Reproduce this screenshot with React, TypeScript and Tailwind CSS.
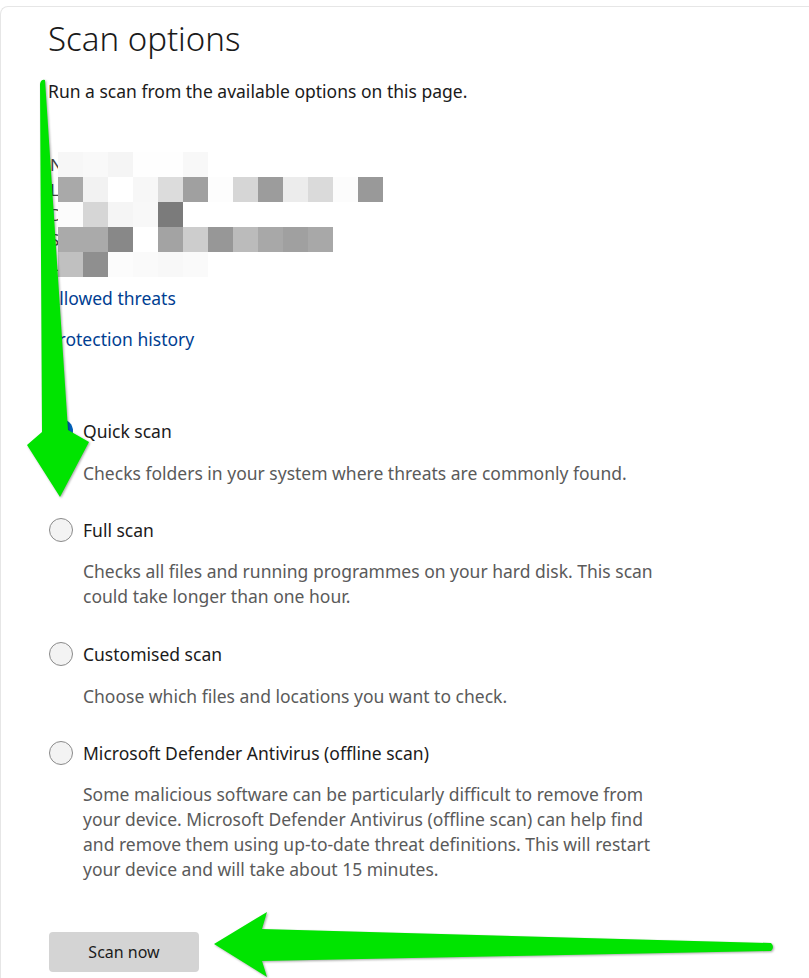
import React from "react"

const font = { fontFamily: '"Noto Sans", "Open Sans", sans-serif' }

// blurred account details, one row of grey cells per line
const blur: { letter: string; cells: string[] }[] = [
  { letter: "N", cells: ["#f7f7f7", "#f9f9f9", "#f5f5f5", "#fefefe", "#fefefe", "#f8f8f8"] },
  {
    letter: "L",
    cells: ["#a9a9a9", "#f2f2f2", "#ffffff", "#f7f7f7", "#dcdcdc", "#a0a0a0", "#fdfdfd", "#d6d6d6", "#9c9c9c", "#ececec", "#dadada", "#fcfcfc", "#999999"],
  },
  { letter: "D", cells: ["#fcfcfc", "#d6d6d6", "#f5f5f5", "#f8f8f8", "#7b7b7b"] },
  {
    letter: "S",
    cells: ["#aaaaaa", "#aaaaaa", "#888888", "#ffffff", "#a3a3a3", "#cdcdcd", "#979797", "#bbbbbb", "#a8a8a8", "#a0a0a0", "#a8a8a8"],
  },
  { letter: "L", cells: ["#c0c0c0", "#8f8f8f", "#fcfcfc", "#fafafa", "#f8f8f8", "#fafafa"] },
]

function Radio({ checked }: { checked?: boolean }) {
  return checked ? (
    <span className="ml-[1px] flex h-6 w-6 shrink-0 items-center justify-center rounded-full bg-[#005fb8]">
      <span className="h-[10px] w-[10px] rounded-full bg-white" />
    </span>
  ) : (
    <span className="ml-[1px] h-6 w-6 shrink-0 rounded-full border border-[#8a8a8a] bg-[#f3f3f3]" />
  )
}

function Option({
  label,
  checked,
  lines,
  top,
  gap,
}: {
  label: string
  checked?: boolean
  lines: string[]
  top: string
  gap: string
}) {
  return (
    <div className={top}>
      <div className="flex h-6 items-center gap-[10px]">
        <Radio checked={checked} />
        <span className="text-[17.5px] text-[#1b1b1b]">{label}</span>
      </div>
      <p className={`${gap} pl-[35px] text-[17.5px] leading-[25px] text-[#5a5a5a]`}>
        {lines.map((l, i) => (
          <span key={i} className="block whitespace-nowrap">
            {l}
          </span>
        ))}
      </p>
    </div>
  )
}

export default function App() {
  return (
    <div className="relative h-[978px] w-[809px] overflow-hidden bg-white pt-[6px]" style={font}>
      <div className="h-full rounded-tl-[8px] border-l border-t border-[#e6e6e6] pl-[47px] pt-[12px]">
        <h1 className="text-[33px] font-light leading-[40px] text-[#1a1a1a]">Scan options</h1>
        <p className="mt-[20px] text-[17.5px] leading-6 text-[#1b1b1b]">Run a scan from the available options on this page.</p>

        <div className="mt-[49px]">
          {blur.map((row, i) => (
            <div key={i} className="flex h-[25px]">
              <span className="w-[10px] pl-[2px] text-[17px] leading-[25px] text-[#444]">{row.letter}</span>
              {row.cells.map((c, j) => (
                <span key={j} className="h-[25px] w-[25px]" style={{ background: c }} />
              ))}
            </div>
          ))}
        </div>

        <div className="mt-[9px] flex flex-col gap-[17px] text-[17.5px] leading-6 text-[#003e92]">
          <span>Allowed threats</span>
          <span>Protection history</span>
        </div>

        <Option
          top="mt-[68px]"
          gap="mt-[18px]"
          checked
          label="Quick scan"
          lines={["Checks folders in your system where threats are commonly found."]}
        />
        <Option
          top="mt-[32px]"
          gap="mt-[17px]"
          label="Full scan"
          lines={["Checks all files and running programmes on your hard disk. This scan", "could take longer than one hour."]}
        />
        <Option top="mt-[33px]" gap="mt-[18px]" label="Customised scan" lines={["Choose which files and locations you want to check."]} />
        <Option
          top="mt-[32px]"
          gap="mt-[17px]"
          label="Microsoft Defender Antivirus (offline scan)"
          lines={[
            "Some malicious software can be particularly difficult to remove from",
            "your device. Microsoft Defender Antivirus (offline scan) can help find",
            "and remove them using up-to-date threat definitions. This will restart",
            "your device and will take about 15 minutes.",
          ]}
        />

        <button className="ml-[1px] mt-[50px] h-10 w-[150px] rounded-[4px] bg-[#d4d4d4] text-[16px] text-[#1b1b1b]">Scan now</button>
      </div>

      {/* annotation arrows drawn over the screenshot */}
      <svg
        className="pointer-events-none absolute left-0 top-0 drop-shadow-[1px_1px_1px_rgba(0,0,0,0.35)]"
        width="809"
        height="978"
        viewBox="0 0 809 978"
      >
        <path d="M40 84 Q41 79 45 80 L68 430 L89 442 L60 497 L27 445 L42 432 Z" fill="#00e400" />
        <path d="M214 944 L267 912 L262 929 L771 943 Q775 947 771 951 L262 961 L267 977 Z" fill="#00e400" />
      </svg>
    </div>
  )
}
